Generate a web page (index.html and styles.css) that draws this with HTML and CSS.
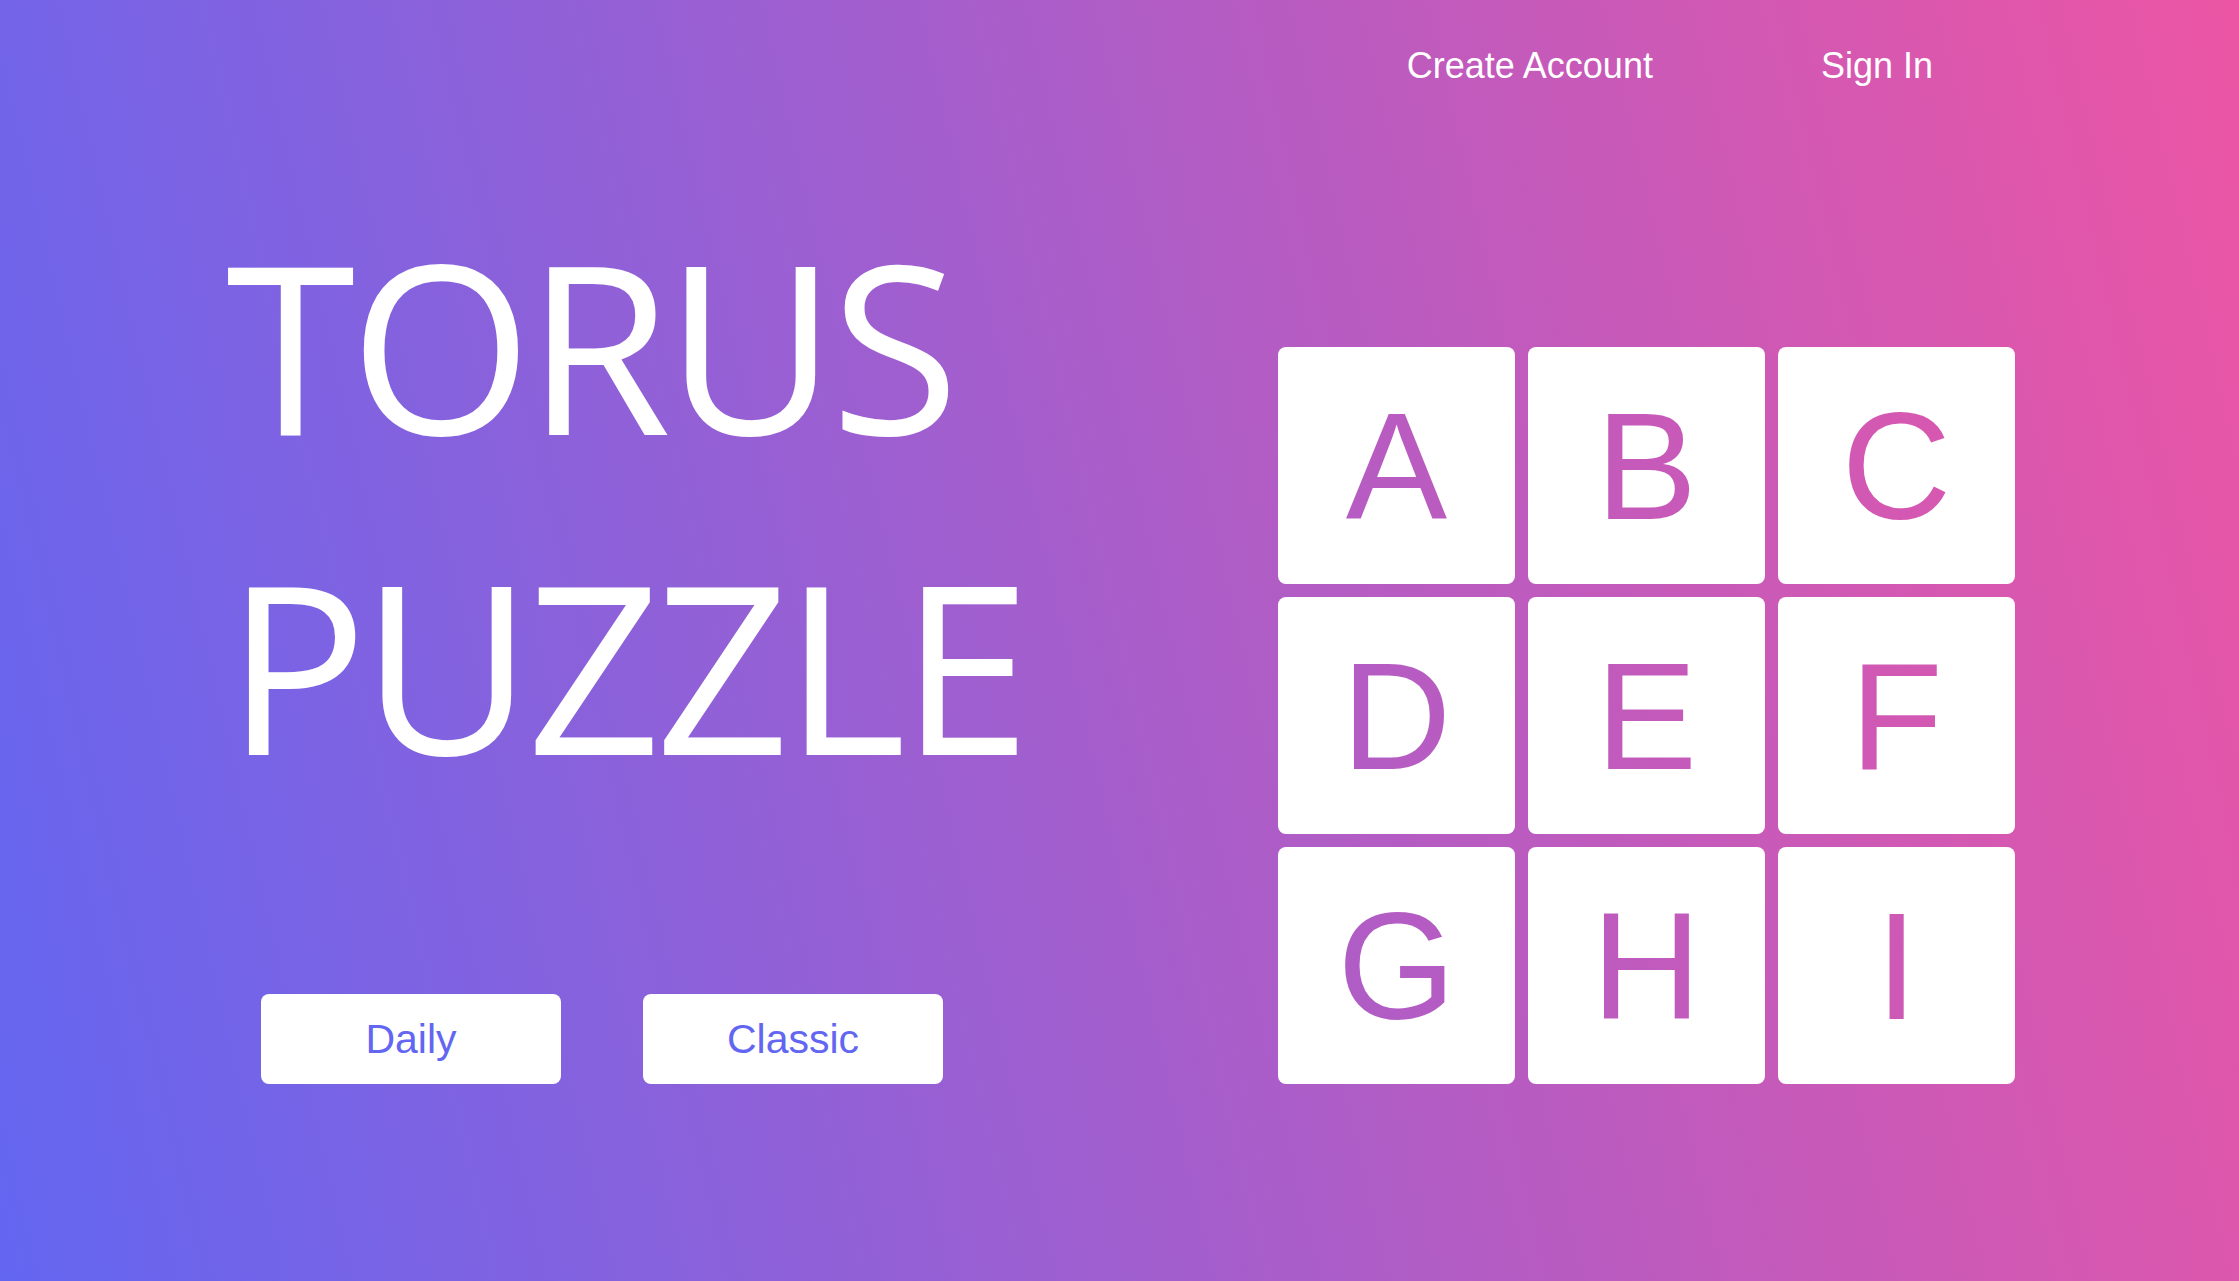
FILE: index.html
```html
<!DOCTYPE html>
<html lang="en">
<head>
<meta charset="utf-8">
<title>Torus Puzzle</title>
<link rel="stylesheet" href="styles.css">
</head>
<body>
<div class="page">
  <header class="topbar">
    <a class="nav-link" href="#">Create Account</a>
    <a class="nav-link" href="#">Sign In</a>
  </header>
  <main class="hero">
    <section class="intro">
      <h1 class="title">TORUS<br>PUZZLE</h1>
      <div class="modes">
        <button class="mode-btn">Daily</button>
        <button class="mode-btn">Classic</button>
      </div>
    </section>
    <section class="board">
      <div class="tile"><span>A</span></div>
      <div class="tile"><span>B</span></div>
      <div class="tile"><span>C</span></div>
      <div class="tile"><span>D</span></div>
      <div class="tile"><span>E</span></div>
      <div class="tile"><span>F</span></div>
      <div class="tile"><span>G</span></div>
      <div class="tile"><span>H</span></div>
      <div class="tile"><span>I</span></div>
    </section>
  </main>
</div>
</body>
</html>
```
FILE: styles.css
```css
html, body {
  margin: 0;
  padding: 0;
}

body {
  font-family: "Liberation Sans", Arial, sans-serif;
}

.page {
  width: 2239px;
  height: 1281px;
  overflow: hidden;
  background: linear-gradient(77deg, #6366f1 0%, #ec55a4 100%);
  box-sizing: border-box;
}

.topbar {
  display: flex;
  justify-content: flex-end;
  gap: 168px;
  padding: 45px 306px 0 0;
}

.nav-link {
  color: #ffffff;
  text-decoration: none;
  font-size: 36px;
  line-height: 41px;
}

.hero {
  display: flex;
  align-items: flex-end;
  padding: 98px 224px 0 226px;
}

.intro {
  flex: 1;
}

.title {
  margin: 0;
  font-family: "Open Sans", sans-serif;
  font-weight: 400;
  font-size: 235px;
  line-height: 320px;
  color: #ffffff;
  letter-spacing: -6px;
}

.modes {
  display: flex;
  gap: 82px;
  margin: 170px 0 0 35px;
}

.mode-btn {
  width: 300px;
  height: 90px;
  border: none;
  border-radius: 8px;
  background: #ffffff;
  color: #6366f1;
  font-family: "Liberation Sans", Arial, sans-serif;
  font-size: 41px;
  padding: 0;
  cursor: pointer;
}

.board {
  display: grid;
  grid-template-columns: repeat(3, 237px);
  grid-template-rows: repeat(3, 237px);
  gap: 13px;
}

.tile {
  background: #ffffff;
  border-radius: 8px;
  display: flex;
  align-items: center;
  justify-content: center;
}

.tile span {
  font-family: "Liberation Sans", Arial, sans-serif;
  font-size: 152px;
  line-height: 1;
  background: linear-gradient(77deg, #6366f1 0%, #ec55a4 100%) fixed;
  -webkit-background-clip: text;
  background-clip: text;
  color: transparent;
}
```
